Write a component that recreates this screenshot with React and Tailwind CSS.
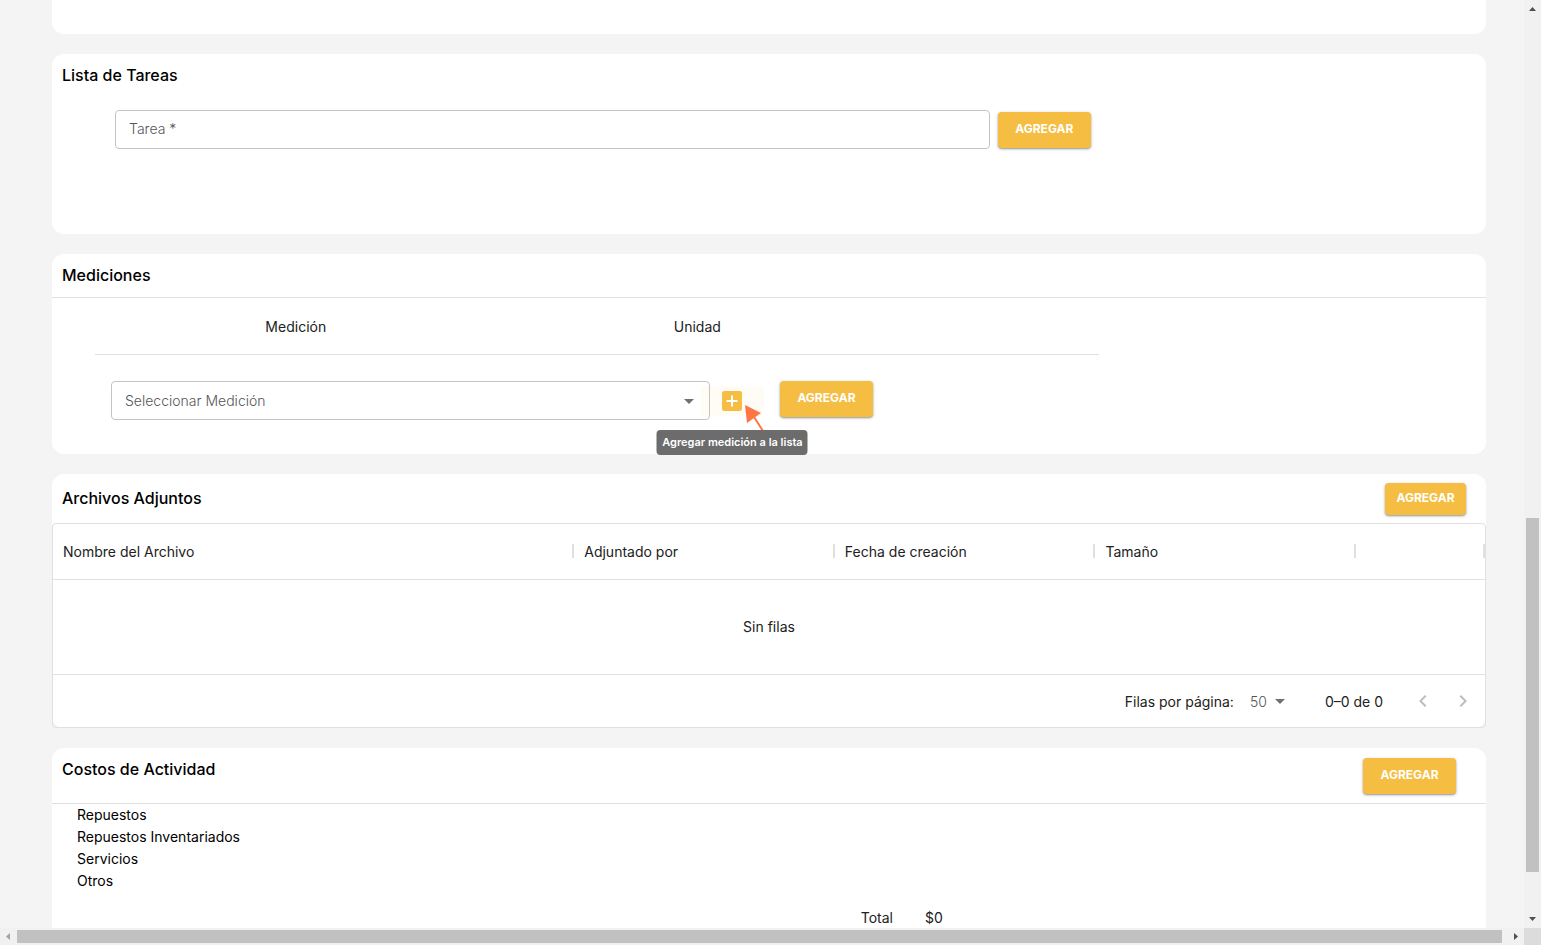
import { useState } from "react";
import clsx from "clsx";

const columns = [
  { label: "Nombre del Archivo", width: "w-[36.4%]" },
  { label: "Adjuntado por", width: "w-[18.2%]" },
  { label: "Fecha de creación", width: "w-[18.2%]" },
  { label: "Tamaño", width: "w-[18.2%]" },
  { label: "", width: "w-[9%]" },
];

const costs = ["Repuestos", "Repuestos Inventariados", "Servicios", "Otros"];

function AddButton({ small }) {
  return (
    <button
      type="button"
      className={clsx(
        "shrink-0 rounded bg-[#f5bd41] pb-[2px] text-[12px] leading-5 font-bold text-white shadow-[0_1px_2px_rgba(0,0,0,0.35),0_1px_4px_rgba(0,0,0,0.12)]",
        small ? "h-8 w-[81px]" : "h-9 w-[93px]"
      )}
    >
      AGREGAR
    </button>
  );
}

function Caret({ className }) {
  return (
    <svg viewBox="0 0 10 5" className={clsx("h-[5px] w-[10px] fill-[#707070]", className)}>
      <path d="M0 0h10L5 5z" />
    </svg>
  );
}

function Title({ children }) {
  return <h2 className="text-[16px] leading-6 font-medium text-black">{children}</h2>;
}

function TaskList() {
  const [task, setTask] = useState("");

  return (
    <section className="min-h-[180px] rounded-xl bg-white">
      <div className="px-[10px] pt-[9px]">
        <Title>Lista de Tareas</Title>
      </div>
      <div className="mt-[23px] ml-[3%] flex w-[70%] items-center gap-2 pr-2 pl-5">
        <input
          type="text"
          required
          aria-label="Tarea"
          placeholder="Tarea *"
          value={task}
          onChange={(e) => setTask(e.target.value)}
          className="h-[39px] min-w-0 flex-1 rounded border border-[#c4c4c4] px-[13px] pb-[2px] text-[14px] font-light text-gray-800 shadow-none outline-none placeholder:text-[#555]"
        />
        <AddButton />
      </div>
    </section>
  );
}

function Measurements() {
  return (
    <section className="min-h-[200px] rounded-xl bg-white">
      <div className="border-b border-[#e0e0e0] px-[10px] pt-[9px] pb-[10px]">
        <Title>Mediciones</Title>
      </div>
      <div className="ml-[3%] w-[70%]">
        <div className="flex h-[57px] items-center border-b border-[#e0e0e0] text-center text-[14px] text-[#212121]">
          <span className="w-2/5">Medición</span>
          <span className="w-2/5">Unidad</span>
        </div>
        <div className="flex items-start pt-[26px] pr-[22.5%] pl-4">
          <div className="relative min-w-0 flex-1">
            <select
              aria-label="Seleccionar Medición"
              className="h-[39px] w-full appearance-none rounded border border-[#c4c4c4] bg-white px-[13px] text-[14px] font-light text-[#555] outline-none"
            >
              <option>Seleccionar Medición</option>
            </select>
            <Caret className="pointer-events-none absolute top-[18px] right-4" />
          </div>
          <div className="relative mt-[5px] mr-4 -ml-[9px]">
            <button
              type="button"
              aria-label="Agregar medición"
              aria-describedby="add-tip"
              className="flex h-[30px] w-[63px] items-center justify-center rounded bg-[#f5bd41]/5"
            >
              <svg viewBox="0 0 20 20" className="h-5 w-5">
                <rect width="20" height="20" rx="2.5" fill="#f5bd41" />
                <path d="M10 4.500v11M4.500 10h11" stroke="#fff" strokeWidth="2" />
              </svg>
            </button>
            <svg viewBox="0 0 19 27" className="absolute top-[19px] left-[44px] h-[27px] w-[19px]">
              <path d="M9 12l9 14" stroke="#ff7543" strokeWidth="2" />
              <path d="M0 0l16 8L2 18z" fill="#ff7543" />
            </svg>
            <span
              id="add-tip"
              role="tooltip"
              className="absolute top-[44px] left-1/2 flex h-[25px] w-[151px] -translate-x-1/2 items-center justify-center rounded bg-[#6c6c6c] text-[11px] font-semibold whitespace-nowrap text-white"
            >
              Agregar medición a la lista
            </span>
          </div>
          <AddButton />
        </div>
      </div>
    </section>
  );
}

function Attachments() {
  return (
    <section className="rounded-xl bg-white">
      <div className="flex h-[49px] items-center justify-between pr-5 pl-[10px]">
        <div className="pb-[2px]">
          <Title>Archivos Adjuntos</Title>
        </div>
        <AddButton small />
      </div>
      <div className="rounded border border-[#e0e0e0]">
        <table className="w-full table-fixed border-collapse">
          <thead>
            <tr className="h-[55px] border-b border-[#e0e0e0]">
              {columns.map((col, i) => (
                <th
                  key={i}
                  className={clsx("p-0 text-left text-[14px] font-normal text-[#212121]", col.width)}
                >
                  <div className="flex items-center justify-between pl-[10px]">
                    {col.label}
                    <span className="ml-auto h-[14px] w-[2px] bg-[#e0e0e0]" />
                  </div>
                </th>
              ))}
            </tr>
          </thead>
          <tbody>
            <tr className="h-[95px]">
              <td colSpan={5} className="text-center text-[14px] text-[#212121]">
                Sin filas
              </td>
            </tr>
          </tbody>
        </table>
        <div className="flex h-[53px] items-center justify-end border-t border-[#e0e0e0] pr-[10px] text-[14px] text-[#212121]">
          <label htmlFor="rows">Filas por página:</label>
          <div className="relative ml-4 w-[35px]">
            <select
              id="rows"
              className="block w-full appearance-none bg-transparent text-[14px] font-light text-[#555] outline-none"
            >
              <option>50</option>
            </select>
            <Caret className="pointer-events-none absolute top-2 right-0" />
          </div>
          <span className="ml-10 whitespace-nowrap">0–0 de 0</span>
          <div className="ml-7 flex gap-4">
            <button type="button" disabled aria-label="Página anterior">
              <svg viewBox="0 0 24 24" className="h-6 w-6 fill-[#bdbdbd]">
                <path d="M15.41 7.41L14 6l-6 6 6 6 1.41-1.41L10.83 12z" />
              </svg>
            </button>
            <button type="button" disabled aria-label="Página siguiente">
              <svg viewBox="0 0 24 24" className="h-6 w-6 fill-[#bdbdbd]">
                <path d="M10 6L8.59 7.41 13.17 12l-4.58 4.59L10 18l6-6z" />
              </svg>
            </button>
          </div>
        </div>
      </div>
    </section>
  );
}

function ActivityCosts() {
  return (
    <section className="rounded-xl bg-white pb-10">
      <div className="flex h-14 items-start justify-between border-b border-[#e0e0e0] pr-[30px] pl-[10px]">
        <div className="pt-[9px]">
          <Title>Costos de Actividad</Title>
        </div>
        <div className="pt-[10px]">
          <AddButton />
        </div>
      </div>
      <ul className="pl-[25px] text-[14px] leading-[22px] text-black">
        {costs.map((cost) => (
          <li key={cost}>{cost}</li>
        ))}
      </ul>
      <div className="mt-[15px] flex gap-8 pl-[56.4%] text-[14px] leading-[22px] text-[#212121]">
        <span>Total</span>
        <span>$0</span>
      </div>
    </section>
  );
}

// classic scrollbars, drawn at the right and bottom edges
function VerticalBar() {
  return (
    <div className="flex w-[17px] shrink-0 flex-col items-center bg-[#f1f1f1]">
      <svg viewBox="0 0 17 17" className="h-[17px] w-[17px] fill-[#505050]">
        <path d="M5 11h7L8.500 7z" />
      </svg>
      <div className="w-full flex-[501]" />
      <div className="w-[13px] flex-[354] bg-[#c1c1c1]" />
      <div className="w-full flex-[39]" />
      <svg viewBox="0 0 17 17" className="h-[17px] w-[17px] fill-[#505050]">
        <path d="M5 6h7L8.500 10z" />
      </svg>
    </div>
  );
}

function HorizontalBar() {
  return (
    <div className="flex h-[17px] shrink-0 items-center bg-[#f1f1f1]">
      <svg viewBox="0 0 17 17" className="h-[17px] w-[17px] shrink-0 fill-[#a3a3a3]">
        <path d="M10 5v7L6 8.500z" />
      </svg>
      <div className="h-[13px] flex-1 bg-[#c1c1c1]" />
      <svg viewBox="0 0 17 17" className="ml-[5px] h-[17px] w-[17px] shrink-0 fill-[#505050]">
        <path d="M7 5v7L11 8.500z" />
      </svg>
      <div className="h-full w-[17px] shrink-0 bg-[#dcdcdc]" />
    </div>
  );
}

export default function App() {
  return (
    <div className="flex h-screen flex-col overflow-hidden bg-[#f4f4f4] font-['Inter','Open_Sans',sans-serif]">
      <div className="flex min-h-0 flex-1">
        <main className="flex min-w-0 flex-1 flex-col gap-5 overflow-hidden pr-[38px] pl-[52px] *:shrink-0">
          <div className="h-[34px] rounded-b-xl bg-white" />
          <TaskList />
          <Measurements />
          <Attachments />
          <ActivityCosts />
        </main>
        <VerticalBar />
      </div>
      <HorizontalBar />
    </div>
  );
}
